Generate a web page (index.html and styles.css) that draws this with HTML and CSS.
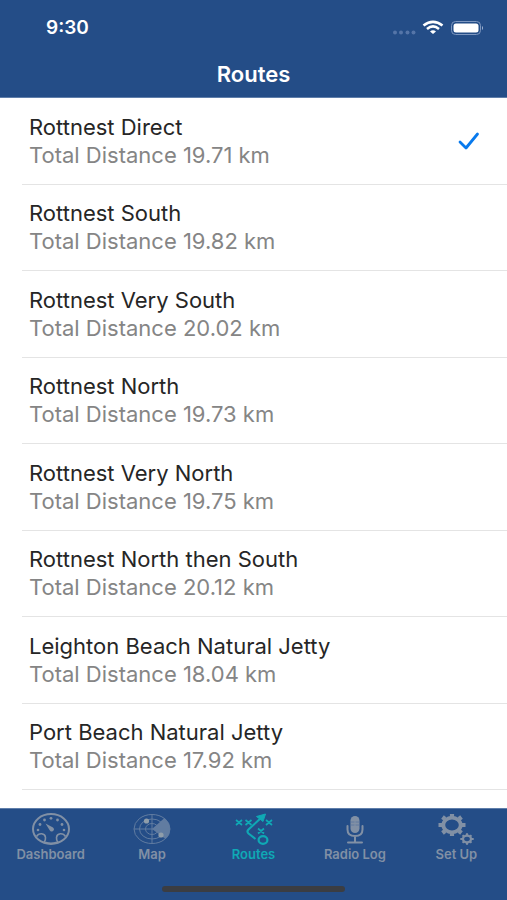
FILE: index.html
```html
<!DOCTYPE html>
<html lang="en">
<head>
<meta charset="utf-8">
<meta name="viewport" content="width=device-width, initial-scale=1">
<title>Routes</title>
<link rel="stylesheet" href="styles.css">
</head>
<body>
<header class="header">
  <div class="status">
    <time class="clock">9:30</time>
    <svg class="signals" width="92" height="18" viewBox="0 0 92 18" aria-hidden="true">
      <g fill="#5575a8"><circle cx="4" cy="13.500" r="2"/><circle cx="10" cy="13.500" r="2"/><circle cx="16.500" cy="13.500" r="2"/><circle cx="22.500" cy="13.500" r="2"/></g>
      <g fill="none" stroke="#fff" stroke-width="2.600"><path d="M32.500 6.600Q42 -1 51.500 6.600"/><path d="M36 9.900Q42 5 48 9.900"/></g>
      <path d="M39 12.400Q42 10.200 45 12.400L42 15Z" fill="#fff"/>
      <rect x="60.500" y="2.500" width="29" height="13" rx="4" fill="none" stroke="#7d97c0"/>
      <rect x="62.500" y="4.500" width="25" height="9" rx="2.500" fill="#fff"/>
      <path d="M91 7v4q1-.5 1-2t-1-2" fill="#a3b5d2"/>
    </svg>
  </div>
  <h1 class="title">Routes</h1>
</header>
<main class="main">
  <ul class="routes">
    <li><button class="route" type="button" aria-pressed="true"><span class="text"><span class="name">Rottnest Direct</span><span class="distance">Total Distance 19.71 km</span></span><svg class="check" width="24" height="20" viewBox="0 0 24 20" aria-hidden="true"><path d="M3 11l6 6L20.500 3" fill="none" stroke="#087aed" stroke-width="2.800" stroke-linecap="round" stroke-linejoin="round"/></svg></button></li>
    <li><button class="route" type="button"><span class="text"><span class="name">Rottnest South</span><span class="distance">Total Distance 19.82 km</span></span></button></li>
    <li><button class="route" type="button"><span class="text"><span class="name">Rottnest Very South</span><span class="distance">Total Distance 20.02 km</span></span></button></li>
    <li><button class="route" type="button"><span class="text"><span class="name">Rottnest North</span><span class="distance">Total Distance 19.73 km</span></span></button></li>
    <li><button class="route" type="button"><span class="text"><span class="name">Rottnest Very North</span><span class="distance">Total Distance 19.75 km</span></span></button></li>
    <li><button class="route" type="button"><span class="text"><span class="name">Rottnest North then South</span><span class="distance">Total Distance 20.12 km</span></span></button></li>
    <li><button class="route" type="button"><span class="text"><span class="name">Leighton Beach Natural Jetty</span><span class="distance">Total Distance 18.04 km</span></span></button></li>
    <li><button class="route" type="button"><span class="text"><span class="name">Port Beach Natural Jetty</span><span class="distance">Total Distance 17.92 km</span></span></button></li>
  </ul>
</main>
<footer class="footer">
  <nav class="tabs">
    <a class="tab" href="#dashboard">
      <svg class="icon" width="40" height="34" viewBox="0 0 40 34" fill="none" stroke="currentColor" aria-hidden="true">
        <ellipse cx="20" cy="17" rx="18" ry="15" stroke-width="2"/>
        <path d="M5.500 24.500C8 20.500 14 21 14.500 25.500Q14.800 28 13 30.500M34.500 24.500C32 20.500 26 21 25.500 25.500Q25.200 28 27 30.500M14 30.200Q20 32.500 26 30.200" stroke-width="1.600"/>
        <path d="M14.500 11.500L22 15.500q2 2 0 3.500t-3.500-1z" fill="currentColor" stroke="none"/>
        <g fill="currentColor" stroke="none"><circle cx="7" cy="18" r="1.300"/><circle cx="9" cy="12.500" r="1.400"/><circle cx="13.500" cy="8" r="1.400"/><circle cx="20" cy="6.300" r="1.400"/><circle cx="26.500" cy="8" r="1.400"/><circle cx="31" cy="12.500" r="1.400"/><circle cx="33" cy="18" r="1.300"/></g>
      </svg>
      <span>Dashboard</span>
    </a>
    <a class="tab" href="#map">
      <svg class="icon dim" width="40" height="34" viewBox="0 0 40 34" fill="none" stroke="currentColor" aria-hidden="true">
        <path d="M20 17L32.500 6Q38 10.500 38 17T33.500 27Z" fill="currentColor" stroke="none"/>
        <ellipse cx="20" cy="17" rx="18" ry="14.500"/><ellipse cx="20" cy="17" rx="12.500" ry="10"/><ellipse cx="20" cy="17" rx="6.500" ry="5.500"/>
        <path d="M20 2.500v29M2 17h36"/>
        <g fill="#8f9daa" stroke="none"><circle cx="14.500" cy="9" r="2.600"/><circle cx="29" cy="23" r="2.600"/></g>
      </svg>
      <span>Map</span>
    </a>
    <a class="tab active" href="#routes" aria-current="page">
      <svg class="icon" width="40" height="34" viewBox="0 0 40 34" fill="none" stroke="currentColor" aria-hidden="true">
        <path d="M2 8l6 5m0-5l-6 5M11.500 8l6 5m0-5l-6 5M32 8l6 5m0-5l-6 5M24 16.500l6 5m0-5l-6 5" stroke-width="1.700"/>
        <path d="M21.500 27L14.500 21.500q-2-2 0-4L27 6" stroke-width="2.100"/>
        <path d="M22.500 4.500L31.500 2L29 9.500z" fill="currentColor" stroke-width="1"/>
        <ellipse cx="29" cy="28" rx="4.400" ry="3.800" stroke-width="2.200"/>
      </svg>
      <span>Routes</span>
    </a>
    <a class="tab" href="#radio-log">
      <svg class="icon" width="40" height="34" viewBox="0 0 40 34" fill="none" stroke="currentColor" aria-hidden="true">
        <rect x="15.500" y="4" width="9" height="17" rx="4.500" fill="currentColor" stroke="none"/>
        <path d="M12.500 14v3.500q0 6.500 7.500 6.500t7.500-6.500V14M20 24v6M13 30.500h14" stroke-width="2" stroke-linecap="round"/>
        <path d="M15.500 10h4M15.500 13h4M20.500 10h4M20.500 13h4" stroke="#5874a0" stroke-width=".8"/>
      </svg>
      <span>Radio Log</span>
    </a>
    <a class="tab" href="#set-up">
      <svg class="icon" width="40" height="34" viewBox="0 0 40 34" fill="none" stroke="currentColor" aria-hidden="true">
        <ellipse cx="16" cy="13" rx="8.700" ry="7.300" stroke-width="3.800"/>
        <path d="M16 5V2M16 21v3M6 13H2.500M26 13h3.500M9 7L6.500 5M23 7l2.500-2M9 19l-2.500 2M23 19l2.500 2" stroke-width="4.200"/>
        <ellipse cx="31" cy="27" rx="4" ry="3.300" stroke-width="2.300"/>
        <path d="M31 23.500v-2.300M31 30.500v2.300M27 27h-2.700M35 27h2.700M28 24.500l-1.500-1.300M34 24.500l1.500-1.300M28 29.500l-1.500 1.300M34 29.500l1.500 1.300" stroke-width="2.100"/>
      </svg>
      <span>Set Up</span>
    </a>
  </nav>
  <div class="home"></div>
</footer>
</body>
</html>
```

FILE: styles.css
```css
* {
  box-sizing: border-box;
}

body {
  display: flex;
  flex-direction: column;
  min-height: 100vh;
  margin: 0;
  background: #fff;
  color: #262626;
  font-family: Inter, "Liberation Sans", sans-serif;
}

.header {
  background: #244d87;
  color: #fff;
  border-bottom: 1px solid #5f7eaa;
}

.status {
  display: flex;
  align-items: center;
  justify-content: space-between;
  height: 55px;
  padding: 0 24px 0 46px;
}

.clock {
  font-size: 19px;
  font-weight: 600;
  line-height: 24px;
}

.title {
  margin: 0;
  padding: 7px 0 11px;
  font-size: 22px;
  font-weight: 600;
  line-height: 24px;
  text-align: center;
}

.main {
  display: flex;
  flex: 1;
  padding-bottom: 18px;
}

.routes {
  display: grid;
  grid-auto-rows: 1fr;
  flex: 1;
  margin: 0;
  padding: 0 0 0 22px;
  list-style: none;
}

.routes li {
  display: flex;
  border-bottom: 1px solid #e4e4e4;
}

.route {
  display: flex;
  flex: 1;
  align-items: center;
  justify-content: space-between;
  padding: 13px 26px 13px 7px;
  border: 0;
  background: none;
  color: inherit;
  font: inherit;
  text-align: left;
}

.text {
  display: flex;
  flex-direction: column;
  font-size: 22px;
  line-height: 28px;
}

.distance {
  color: #858585;
}

.footer {
  padding-bottom: 8px;
  border-top: 1px solid #5f7eaa;
  background: #244d87;
}

.tabs {
  display: flex;
}

.tab {
  display: flex;
  flex: 1;
  flex-direction: column;
  align-items: center;
  padding-top: 3px;
  color: #8190a5;
  font-size: 13px;
  font-weight: 600;
  line-height: 16px;
  text-decoration: none;
}

.dim {
  color: #617ca1;
}

.active {
  color: #0fa9b5;
}

.home {
  width: 36%;
  height: 6px;
  margin: 24px auto 0;
  border-radius: 3px;
  background: #3b3d42;
}
```
